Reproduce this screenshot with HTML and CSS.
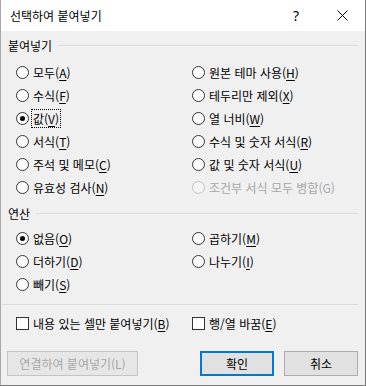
FILE: index.html
```html
<!DOCTYPE html>
<html lang="ko">
<head>
<meta charset="utf-8">
<link rel="stylesheet" href="styles.css">
</head>
<body>
<div class="dialog">
  <div class="titlebar">
    <span class="title">선택하여 붙여넣기</span>
    <span class="help">?</span>
    <svg class="close" width="11" height="11" viewBox="0 0 11 11"><path d="M0.5 0.5 L10.5 10.5 M10.5 0.5 L0.5 10.5" stroke="#000" stroke-width="1" fill="none"/></svg>
  </div>
  <div class="content">
    <div class="group-head"><span>붙여넣기</span></div>
    <div class="options paste">
      <label class="opt"><span class="radio"></span><span>모두(<u>A</u>)</span></label>
      <label class="opt"><span class="radio"></span><span>원본 테마 사용(<u>H</u>)</span></label>
      <label class="opt"><span class="radio"></span><span>수식(<u>F</u>)</span></label>
      <label class="opt"><span class="radio"></span><span>테두리만 제외(<u>X</u>)</span></label>
      <label class="opt"><span class="radio checked"></span><span class="focus">값(<u>V</u>)</span></label>
      <label class="opt"><span class="radio"></span><span>열 너비(<u>W</u>)</span></label>
      <label class="opt"><span class="radio"></span><span>서식(<u>T</u>)</span></label>
      <label class="opt"><span class="radio"></span><span>수식 및 숫자 서식(<u>R</u>)</span></label>
      <label class="opt"><span class="radio"></span><span>주석 및 메모(<u>C</u>)</span></label>
      <label class="opt"><span class="radio"></span><span>값 및 숫자 서식(<u>U</u>)</span></label>
      <label class="opt"><span class="radio"></span><span>유효성 검사(<u>N</u>)</span></label>
      <label class="opt disabled"><span class="radio"></span><span>조건부 서식 모두 병합(G)</span></label>
    </div>
    <div class="group-head op-head"><span>연산</span></div>
    <div class="options ops">
      <label class="opt"><span class="radio checked"></span><span>없음(<u>O</u>)</span></label>
      <label class="opt"><span class="radio"></span><span>곱하기(<u>M</u>)</span></label>
      <label class="opt"><span class="radio"></span><span>더하기(<u>D</u>)</span></label>
      <label class="opt"><span class="radio"></span><span>나누기(<u>I</u>)</span></label>
      <label class="opt"><span class="radio"></span><span>빼기(<u>S</u>)</span></label>
    </div>
    <div class="separator"></div>
    <div class="checks">
      <label class="opt"><span class="check"></span><span>내용 있는 셀만 붙여넣기(<u>B</u>)</span></label>
      <label class="opt"><span class="check"></span><span>행/열 바꿈(<u>E</u>)</span></label>
    </div>
    <div class="buttons">
      <button class="btn disabled-btn">연결하여 붙여넣기(L)</button>
      <button class="btn primary">확인</button>
      <button class="btn">취소</button>
    </div>
  </div>
</div>
</body>
</html>
```
FILE: styles.css
```css
html, body {
  margin: 0;
  padding: 0;
  background: #f0f0f0;
}
.dialog {
  width: 366px;
  height: 386px;
  box-sizing: border-box;
  background: #f0f0f0;
  border-left: 1px solid #a8a8a8;
  border-right: 1px solid #7a7a7a;
  border-bottom: 1px solid #7a7a7a;
  font-family: "Noto Sans CJK KR", "Noto Sans", sans-serif;
  font-size: 12px;
  color: #000;
}
.titlebar {
  height: 31px;
  background: #fff;
  display: flex;
  align-items: center;
  padding-left: 9px;
}
.title {
  flex: 1;
  font-size: 12px;
}
.help {
  font-family: "Noto Sans", sans-serif;
  font-size: 14px;
  margin-right: 38px;
  margin-top: -1px;
}
.close {
  margin-right: 17px;
  margin-top: -1px;
}
.content {
  padding: 0 7px 0 7px;
}
.group-head {
  margin-top: 7px;
  height: 16px;
  display: flex;
  align-items: center;
  gap: 6px;
  line-height: 16px;
}
.group-head::after {
  content: "";
  flex: 1;
  border-top: 1px solid #dcdcdc;
  margin-top: -2px;
}
.options {
  display: grid;
  grid-template-columns: 176px 1fr;
  grid-auto-rows: 23px;
  padding-left: 8px;
}
.paste {
  margin-top: 7px;
}
.op-head {
  margin-top: 7px;
}
.ops {
  margin-top: 5px;
}
.opt {
  display: flex;
  align-items: center;
  gap: 4px;
  white-space: nowrap;
  line-height: 15px;
}
.radio {
  width: 13px;
  height: 13px;
  box-sizing: border-box;
  border: 1px solid #333;
  border-radius: 50%;
  background: #fff;
  position: relative;
  flex: none;
}
.radio.checked::after {
  content: "";
  position: absolute;
  left: 3px;
  top: 3px;
  width: 5px;
  height: 5px;
  border-radius: 50%;
  background: #000;
}
.disabled {
  color: #a6a6a6;
}
.disabled .radio {
  border-color: #c2c2c2;
  background: #f4f4f4;
}
.focus {
  outline: 1px dotted #000;
  outline-offset: 0;
  padding: 1px 1px;
  margin-left: -1px;
}
u {
  text-decoration-thickness: 1px;
  text-underline-offset: 2px;
}
.separator {
  margin: 8px 0 0 -6px;
  border-top: 1px solid #dcdcdc;
}
.checks {
  margin-top: 7px;
  height: 23px;
  display: grid;
  grid-template-columns: 176px 1fr;
  padding-left: 8px;
}
.check {
  width: 13px;
  height: 13px;
  box-sizing: border-box;
  border: 1px solid #333;
  background: #fff;
  flex: none;
}
.buttons {
  margin-top: 16px;
  margin-left: -1px;
  display: flex;
  gap: 10px;
}
.btn {
  height: 25px;
  width: 74px;
  box-sizing: border-box;
  background: #e1e1e1;
  border: 1px solid #adadad;
  font-family: "Noto Sans CJK KR", "Noto Sans", sans-serif;
  font-size: 12px;
  color: #000;
  padding: 0;
  margin: 0;
}
.disabled-btn {
  width: 131px;
  margin-right: auto;
  color: #a6a6a6;
  border-color: #c4c4c4;
  background: #e6e6e6;
}
.primary {
  border: 2px solid #0078d7;
}
```
